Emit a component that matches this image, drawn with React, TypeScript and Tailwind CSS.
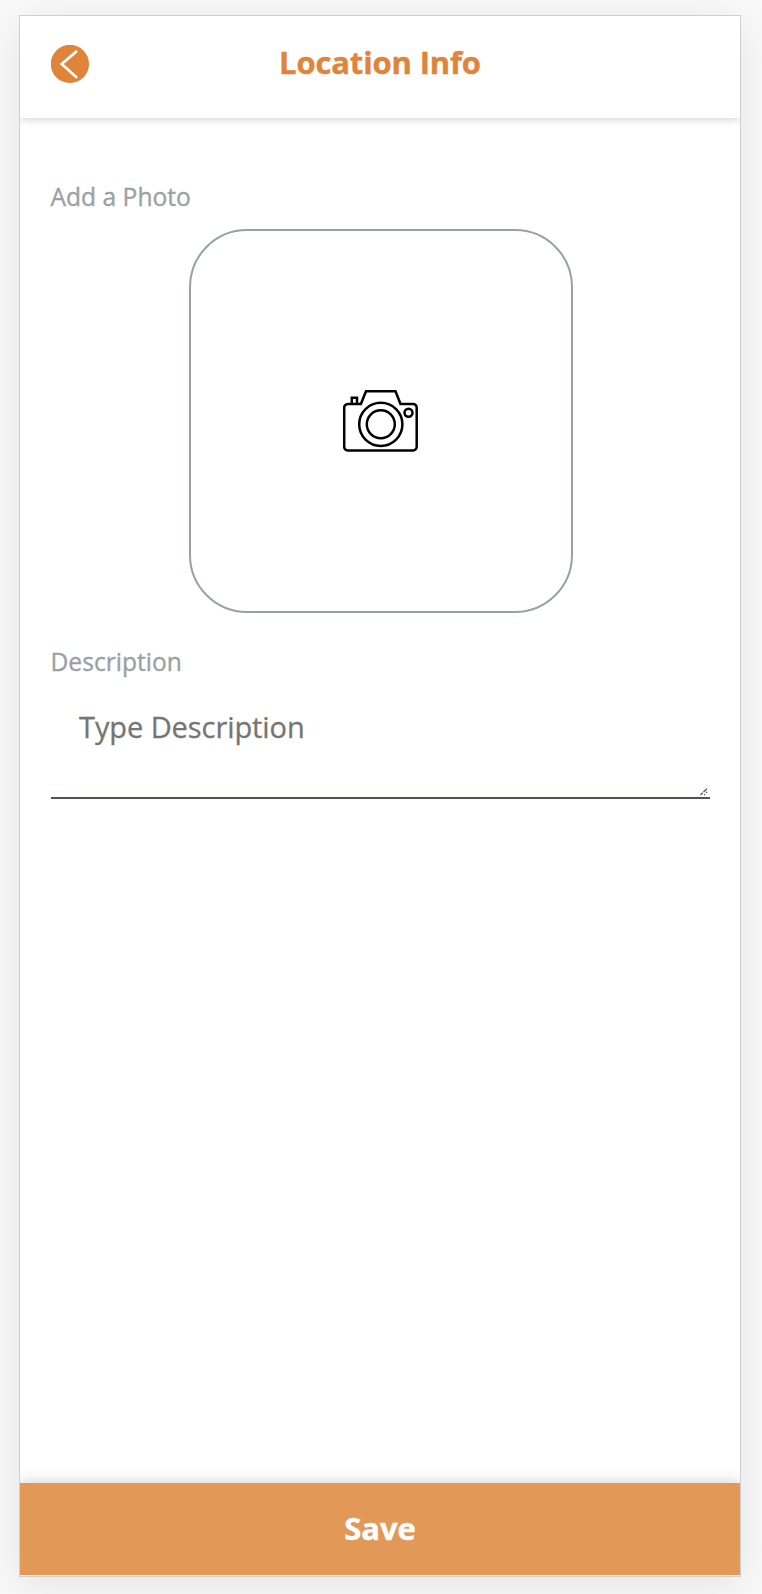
import React from "react";

function BackIcon() {
  return (
    <svg viewBox="0 0 39 39" className="h-[39px] w-[39px]" fill="none">
      <circle cx="18.9" cy="18.9" r="19.1" fill="#e08439" />
      <path d="M25.2 6.6L10.7 19L25.2 32" stroke="#fff" strokeWidth="2.7" strokeLinecap="round" strokeLinejoin="miter" />
    </svg>
  );
}

function CameraIcon() {
  return (
    <svg viewBox="0 0 76 63" className="-mt-[2px] h-[63px] w-[76px]" fill="none" stroke="#000" strokeWidth="2.5">
      <path d="M17.9 15L23 2.2H52.5L57.5 15H70A3.6 3.6 0 0 1 73.7 18.6V57.8A3.6 3.6 0 0 1 70 61.4H4.6A3.6 3.6 0 0 1 1.2 57.8V18.6A3.6 3.6 0 0 1 4.6 15Z" />
      <path d="M8.8 15V8.8H14V15" />
      <circle cx="37.8" cy="35.3" r="21.6" />
      <circle cx="37.8" cy="35.3" r="14" />
      <circle cx="65.5" cy="23.7" r="4" />
    </svg>
  );
}

export default function App() {
  return (
    <div className="h-[1594px] w-[762px] overflow-hidden bg-[#f9f9f9] pt-[15px] pl-[19px] font-['Open_Sans','Noto_Sans',sans-serif]">
      <main className="flex h-[1562px] w-[722px] flex-col overflow-hidden border border-[#d0d0d0] bg-white shadow-[0_8px_40px_rgba(0,0,0,0.09)]">
        <header className="grid h-[102px] shrink-0 grid-cols-[39px_1fr_39px] items-start px-[31px] pt-[29px] shadow-[0_2px_8px_rgba(0,0,0,0.16)]">
          <button type="button" aria-label="Back">
            <BackIcon />
          </button>
          <h1 className="-mt-px text-center text-[31px] leading-[36px] font-bold tracking-[-0.15px] text-[#e08439] [-webkit-text-stroke:0.4px_#e08439]">
            Location Info
          </h1>
        </header>
        <section className="flex flex-1 flex-col px-[31px] pt-[61px]">
          <h2 className="-ml-[0.5px] pt-px text-[24.6px] leading-[33px] text-[#9aa1a3] [-webkit-text-stroke:0.35px_#9aa1a3]">Add a Photo</h2>
          <button
            type="button"
            aria-label="Add a photo"
            className="mt-[16px] ml-[138px] flex h-[384px] w-[384px] items-center justify-center rounded-[58px] border-2 border-[#9aa1a3]"
          >
            <CameraIcon />
          </button>
          <label
            htmlFor="description"
            className="mt-[32px] -ml-[0.5px] text-[24.6px] leading-[34px] text-[#9aa1a3] [-webkit-text-stroke:0.35px_#9aa1a3]"
          >
            Description
          </label>
          <div className="relative mt-[16px] h-[104px]">
            <textarea
              id="description"
              placeholder="Type Description"
              className="block h-[104px] w-[659px] resize-none overflow-hidden border-b-2 border-[#5b4f4e] px-[28px] pt-[12px] text-[29px] leading-[40px] tracking-[-0.08px] text-[#333] outline-none placeholder:text-[#757575] placeholder:[-webkit-text-stroke:0.3px_#757575]"
            />
            <svg viewBox="0 0 8 8" className="pointer-events-none absolute right-px bottom-[3px] h-[8px] w-[8px]" fill="none" stroke="#555" strokeWidth="1.3">
              <path d="M0.5 7L2.7 4.8M3.5 4L6.8 0.8M4.2 7L5 6.2M6 4.8L7 3.8" />
            </svg>
          </div>
        </section>
        <button
          type="button"
          className="mb-px h-[92px] shrink-0 bg-[#e29857] pb-[2px] text-[31px] font-bold text-white shadow-[0_-2px_12px_rgba(0,0,0,0.16)] [-webkit-text-stroke:0.4px_#fff]"
        >
          Save
        </button>
      </main>
    </div>
  );
}
